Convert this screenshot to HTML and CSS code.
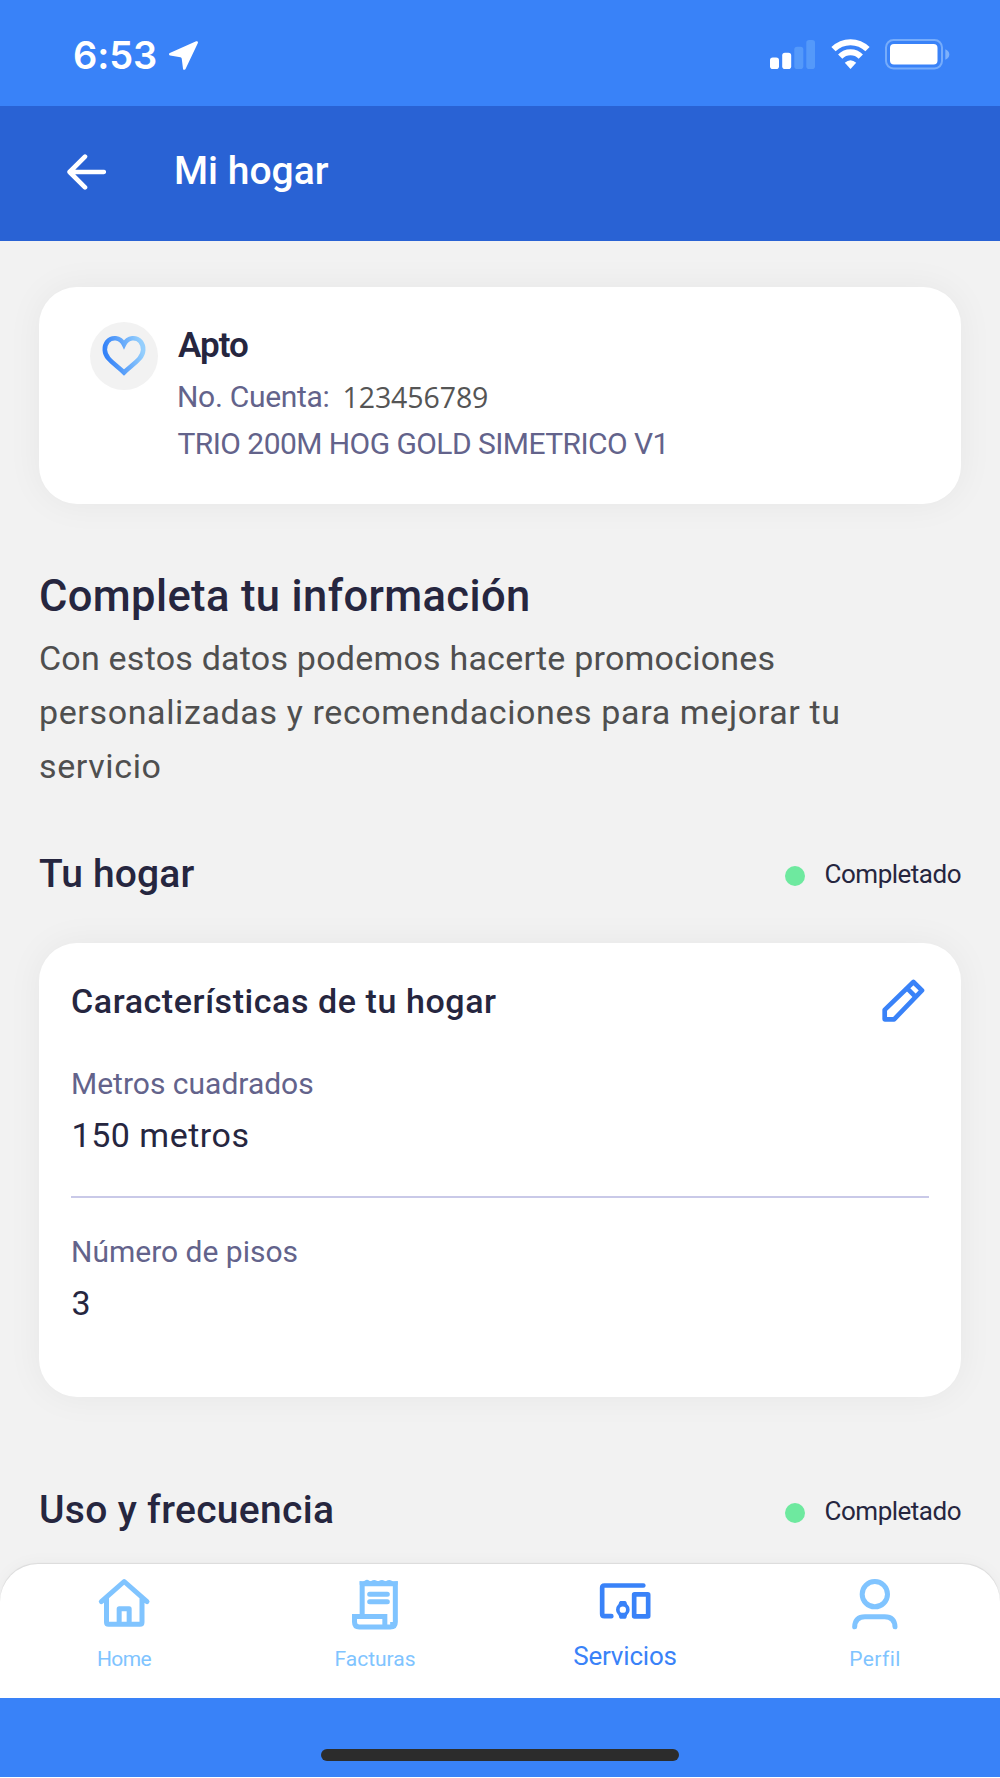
FILE: index.html
```
<!DOCTYPE html>
<html lang="es">
    <head>
        <meta charset="utf-8" />
        <title>Mi hogar</title>
        <link rel="stylesheet" href="styles.css">
    </head>

    <body>
        <div class="statusbar">
            <span class="time">6:53</span>
            <svg class="location" viewBox="386 60 93 92">
                <path d="M472 67L393 102L424 107Q430 108 431 114L435 145Z" />
            </svg>
            <div class="system">
                <svg class="signal" viewBox="0 0 45 31">
                    <rect x="0" y="18.5" width="9" height="11.5" rx="2.8" />
                    <rect x="12.2" y="13.7" width="9" height="16.3" rx="2.8" />
                    <rect class="off" x="24.3" y="7.7" width="9" height="22.3" rx="2.8" />
                    <rect class="off" x="36.3" y="1" width="8.7" height="29" rx="2.8" />
                </svg>
                <svg class="wifi" viewBox="0 0 39 31">
                    <path class="arc" d="M2.5 10.2A24 24 0 0 1 36.5 10.2" />
                    <path class="arc" d="M9.2 17.6A14.6 14.6 0 0 1 29.8 17.6" />
                    <path d="M19.5 30L13.8 23.7Q19.5 18.7 25.2 23.7Z" />
                </svg>
                <svg class="battery" viewBox="0 0 65 31">
                    <rect class="shell" x="1" y="1" width="56" height="28.5" rx="7.5" />
                    <rect x="5" y="5" width="47.5" height="20.6" rx="4" />
                    <path class="off" d="M60.3 10.3Q64.3 12 64.3 15.5T60.3 20.7Z" />
                </svg>
            </div>
        </div>

        <div class="header">
            <svg class="back" viewBox="0 0 39 36">
                <path d="M18 2.6L2.6 18L18 33.4M2.6 18H36.8" />
            </svg>
            <h1>Mi hogar</h1>
        </div>

        <div class="main">
            <div class="card account">
                <div class="heart">
                    <svg viewBox="0 0 68 68">
                        <defs>
                            <linearGradient id="blue" x1="0" y1="0.6" x2="1" y2="0.4">
                                <stop offset="0.05" stop-color="#3583f8" />
                                <stop offset="1" stop-color="#95cffd" />
                            </linearGradient>
                        </defs>
                        <path d="M34 22.5C30 14.5 21.5 15 17.5 19.5C13.5 24.5 14 31.5 18.5 36.5C23 41.5 29 45.5 34 50.5C39 45.5 45 41.5 49.5 36.5C54 31.5 54.5 24.5 50.5 19.5C46.5 15 38 14.5 34 22.5Z" />
                    </svg>
                </div>
                <div>
                    <div class="name">Apto</div>
                    <div class="line">No. Cuenta: <span class="number">123456789</span></div>
                    <div class="line plan">TRIO 200M HOG GOLD SIMETRICO V1</div>
                </div>
            </div>

            <h2>Completa tu información</h2>
            <p class="intro"><span>Con estos datos podemos hacerte promociones</span> personalizadas y recomendaciones para mejorar tu servicio</p>

            <div class="section">
                <h3 class="first">Tu hogar</h3>
                <div class="status"><i class="dot"></i>Completado</div>
            </div>

            <div class="card detail">
                <div class="title">
                    <h4>Características de tu hogar</h4>
                    <svg class="edit" viewBox="0 0 128 128">
                        <path d="M8 120V92L93.5 9L119 34L36 120ZM75 28L100 53" />
                    </svg>
                </div>
                <div class="label">Metros cuadrados</div>
                <div class="value">150 metros</div>
                <hr>
                <div class="label">Número de pisos</div>
                <div class="value">3</div>
            </div>

            <div class="section last">
                <h3>Uso y frecuencia</h3>
                <div class="status"><i class="dot"></i>Completado</div>
            </div>
        </div>

        <div class="nav">
            <div class="item home">
                <svg viewBox="0 0 162 162">
                    <path d="M13 77L81.5 16.5L150 77M28.5 68V139Q28.5 145 34.5 145H129Q135 145 135 139V68M66.5 145V98H96.5V145" />
                </svg>
                <span>Home</span>
            </div>
            <div class="item">
                <svg viewBox="0 0 162 162">
                    <path class="sharp" d="M42.5 121V23H142V138Q142 153 127 153H34Q19.5 153 19.5 138V121.5H110.5V145Q110.5 153 118 153M134 138V145Q134 153 126 153" />
                    <path class="teeth" d="M35 26V15L44 17L50 14Q57 9 64 14L68 16L74 13Q80 10 86 14L91 16L97 13Q103 10 109 14L113 16L119 13Q125 10 131 14L136 17L149 15V26Z" />
                    <path d="M65 54.5H118M65 77H118" />
                </svg>
                <span>Facturas</span>
            </div>
            <div class="item active">
                <svg viewBox="0 0 162 162">
                    <path d="M136 28.5H19Q12.5 28.5 12.5 35V114Q12.5 120.5 19 120.5H40" />
                    <rect x="108.5" y="55" width="42" height="66" rx="1" />
                    <path class="strap" d="M67 75H82Q86 76 87 84V118Q86 127 82 128H67Q63 127 62 118V84Q63 76 67 75Z" />
                    <circle class="watch" cx="74.5" cy="101" r="15" />
                </svg>
                <span>Servicios</span>
            </div>
            <div class="item profile">
                <svg viewBox="0 0 162 162">
                    <circle cx="80.5" cy="54.5" r="38" />
                    <path d="M20 152.5Q21 122 51 122H110Q140 122 141 152.5" />
                </svg>
                <span>Perfil</span>
            </div>
        </div>

        <div class="bottom">
            <div class="indicator"></div>
        </div>
    </body>
</html>
```
FILE: styles.css
```
* {
    box-sizing: border-box;
}

body {
    display: flex;
    flex-direction: column;
    width: 1000px;
    height: 1778px;
    margin: 0;
    padding-bottom: 1px;
    overflow: hidden;
    background: linear-gradient(#f2f2f2 1777px, white 1777px);
    font-family: Roboto, "Liberation Sans", sans-serif;
    color: #26263f;
}

svg {
    display: block;
    flex: none;
}

h1,
h2,
h3,
h4,
p {
    margin: 0;
    font-weight: 500;
}

/* status bar */
.statusbar {
    display: flex;
    flex: none;
    align-items: flex-start;
    height: 106px;
    padding: 35px 50px 0 73px;
    background: #3982f8;
}

.time {
    color: white;
    font: 600 38px/40px Inter, sans-serif;
    letter-spacing: -0.1px;
}

.location {
    width: 31px;
    height: 31px;
    margin: 5px 0 0 11px;
    fill: white;
    stroke: white;
    stroke-width: 8;
    stroke-linejoin: round;
}

.system {
    display: flex;
    margin: 4px 0 0 auto;
    fill: white;
}

.system svg {
    height: 31px;
}

.signal {
    width: 45px;
}

.wifi {
    width: 39px;
    margin: 0 15px 0 16px;
}

.battery {
    width: 65px;
}

.off {
    fill: #5499fa;
}

.battery .off {
    fill: #7db1fb;
}

.arc {
    fill: none;
    stroke: white;
    stroke-width: 6;
}

.shell {
    fill: none;
    stroke: #76acfb;
    stroke-width: 2;
}

/* header */
.header {
    display: flex;
    flex: none;
    align-items: center;
    height: 135px;
    padding: 0 0 6px 67px;
    background: #2962d4;
}

.back {
    width: 39px;
    height: 36px;
    margin-top: 3px;
    fill: none;
    stroke: white;
    stroke-width: 4.6;
    stroke-linecap: round;
    stroke-linejoin: round;
}

.header h1 {
    margin-left: 68px;
    color: white;
    font-size: 39px;
    line-height: 48px;
    letter-spacing: 0;
}

/* content */
.main {
    flex: 1;
    min-height: 0;
    padding: 46px 39px 0;
}

.card {
    border-radius: 38px;
    background: white;
    box-shadow: 0 0 36px rgba(0, 0, 0, 0.05);
}

.account {
    display: flex;
    height: 217px;
    padding: 35px 51px;
}

.heart {
    width: 68px;
    height: 68px;
    margin-right: 20px;
    border-radius: 50%;
    background: #f2f2f2;
}

.heart path {
    fill: none;
    stroke: url(#blue);
    stroke-width: 4.6;
}

.name {
    margin: 1px 0 4px;
    font-size: 35px;
    font-weight: 600;
    line-height: 46px;
    letter-spacing: -0.95px;
}

.line {
    display: flex;
    margin-left: -1px;
    color: #63638b;
    font-size: 30px;
    line-height: 48px;
    letter-spacing: -0.3px;
}

.number {
    margin-left: 13px;
    color: #555;
    font-family: "Open Sans", sans-serif;
    font-size: 28.5px;
    letter-spacing: -0.1px;
}

.plan {
    margin: -1px 0 0 -0.5px;
    letter-spacing: -0.56px;
}

h2 {
    margin-top: 66px;
    font-size: 43.5px;
    line-height: 54px;
    letter-spacing: 0.38px;
}

.intro {
    margin-top: 7px;
    color: #4f4f4f;
    font-size: 34px;
    font-weight: 400;
    line-height: 54px;
    letter-spacing: 0.62px;
}

.intro span {
    letter-spacing: 0.22px;
}

.section {
    display: flex;
    justify-content: space-between;
    height: 48px;
    margin: 56px 0 46px;
}

.section.last {
    margin: 89px 0 0;
}

h3 {
    font-size: 39px;
    line-height: 48px;
    letter-spacing: 0.32px;
}

h3.first {
    line-height: 50px;
    letter-spacing: 0.15px;
}

.status {
    display: flex;
    align-items: center;
    height: 51px;
    font-size: 26px;
    line-height: 51px;
    letter-spacing: -0.5px;
}

.dot {
    width: 20px;
    height: 20px;
    margin: 3px 20px 0 0;
    border-radius: 50%;
    background: #6ee99f;
}

.detail {
    height: 454px;
    padding: 35.5px 32px;
}

.title {
    display: flex;
    align-items: center;
    justify-content: space-between;
    height: 44px;
    margin-bottom: 41px;
}

h4 {
    font-size: 34px;
    line-height: 44px;
    letter-spacing: 0.57px;
}

.edit {
    width: 43px;
    height: 43px;
    margin: 0 4px 0 0;
    fill: none;
    stroke: #3982f8;
    stroke-width: 14;
    stroke-linejoin: round;
}

.label {
    color: #63638b;
    font-size: 30px;
    line-height: 40px;
    letter-spacing: 0;
}

.value {
    margin: 9px 0 0 0.5px;
    font-size: 34px;
    line-height: 44px;
    letter-spacing: 0.52px;
}

hr {
    margin: 39.5px 0 33.5px;
    border: 0;
    border-top: 2px solid #c9c9e8;
}

/* bottom tabs */
.nav {
    display: grid;
    flex: none;
    grid-template-columns: repeat(4, 1fr);
    height: 134px;
    padding: 12px 0 0;
    border-radius: 38px 38px 0 0;
    background: white;
    box-shadow: 0 -1px 1px -0.5px rgba(0, 0, 0, 0.08), 0 -2px 16px rgba(0, 0, 0, 0.03);
}

.item {
    display: flex;
    flex-direction: column;
    align-items: center;
    color: #80c4ff;
    font-size: 21px;
    line-height: 30px;
}

.item svg {
    width: 54px;
    height: 54px;
    margin-bottom: 14px;
    fill: none;
    stroke: currentColor;
    stroke-width: 15;
    stroke-linecap: round;
    stroke-linejoin: round;
}

.item .sharp {
    stroke-linecap: butt;
    stroke-linejoin: miter;
}

.item .teeth,
.item .strap {
    fill: currentColor;
    stroke: none;
}

.item .watch {
    fill: white;
    stroke-width: 11;
}

.home {
    padding-right: 2px;
}

.home span {
    letter-spacing: -0.6px;
}

.profile span {
    letter-spacing: 0.4px;
}

.active {
    color: #3982f8;
    font-size: 26px;
    letter-spacing: -0.18px;
}

.active svg {
    margin-bottom: 11px;
    stroke-width: 14;
}

.bottom {
    display: flex;
    flex: none;
    align-items: flex-end;
    justify-content: center;
    height: 79px;
    padding-bottom: 16px;
    background: #3982f8;
}

.indicator {
    width: 358px;
    height: 12px;
    border-radius: 6px;
    background: #2c2c2c;
}
```
